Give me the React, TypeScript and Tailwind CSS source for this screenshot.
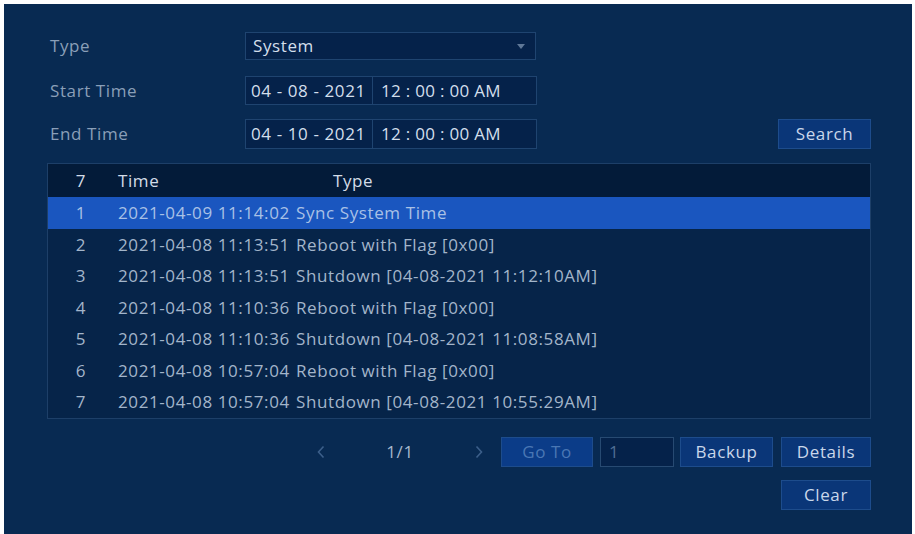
import React from "react";

const rows = [
  { n: 1, time: "2021-04-09 11:14:02", type: "Sync System Time" },
  { n: 2, time: "2021-04-08 11:13:51", type: "Reboot with Flag [0x00]" },
  { n: 3, time: "2021-04-08 11:13:51", type: "Shutdown [04-08-2021 11:12:10AM]" },
  { n: 4, time: "2021-04-08 11:10:36", type: "Reboot with Flag [0x00]" },
  { n: 5, time: "2021-04-08 11:10:36", type: "Shutdown [04-08-2021 11:08:58AM]" },
  { n: 6, time: "2021-04-08 10:57:04", type: "Reboot with Flag [0x00]" },
  { n: 7, time: "2021-04-08 10:57:04", type: "Shutdown [04-08-2021 10:55:29AM]" },
];

const Label = ({ children }: { children: React.ReactNode }) => (
  <div className="w-[198px] pl-[3px] text-[#8a9fb8]">{children}</div>
);

const DateTime = ({ date }: { date: string }) => (
  <div className="flex h-full border border-[#1f4470] bg-[#05224a]">
    <div className="flex w-[127px] items-center border-r border-[#1f4470] pl-[5px] text-[#d3dfec]">
      {date}
    </div>
    <div className="flex w-[163px] items-center pl-[8px] tracking-[0.3px] text-[#d3dfec]">
      12 : 00 : 00 AM
    </div>
  </div>
);

const Btn = ({ children, w, dim }: { children: React.ReactNode; w: string; dim?: boolean }) => (
  <div
    className={`flex h-full items-center justify-center border border-[#1d4c8c] ${
      dim ? "bg-[#0b3c88] text-[#4a77b4]" : "bg-[#0a3678] text-[#c9d7ea]"
    } ${w}`}
  >
    {children}
  </div>
);

const Chevron = ({ flip }: { flip?: boolean }) => (
  <svg width="8" height="14" viewBox="0 0 8 14" className={flip ? "rotate-180" : ""}>
    <path d="M6.5 1.5 L1.5 7 L6.5 12.5" fill="none" stroke="#3c5f8a" strokeWidth="1.6" />
  </svg>
);

export default function App() {
  return (
    <div className="h-[534px] w-[915px] bg-white pl-[4px] pt-[4px] pr-[3px]">
      <div
        className="flex h-full w-full flex-col bg-[#082a52] pl-[43px] pr-[41px] pt-[28px] text-[17px] tracking-[0.6px]"
        style={{ fontFamily: '"Open Sans", "Noto Sans", sans-serif' }}
      >
        {/* filter form */}
        <div className="flex h-[28px] items-center">
          <Label>Type</Label>
          <div className="flex h-full w-[291px] items-center justify-between border border-[#1f4470] bg-[#05224a] pl-[7px] pr-[10px] text-[#d3dfec]">
            <span>System</span>
            <svg width="8" height="5" viewBox="0 0 8 5">
              <path d="M0 0 L8 0 L4 5 Z" fill="#5f7897" />
            </svg>
          </div>
        </div>
        <div className="mt-[16px] flex h-[29px] items-center">
          <Label>Start Time</Label>
          <DateTime date="04 - 08 - 2021" />
        </div>
        <div className="mt-[14px] flex h-[30px] items-center">
          <Label>End Time</Label>
          <DateTime date="04 - 10 - 2021" />
          <div className="ml-auto h-full">
            <Btn w="w-[93px]">Search</Btn>
          </div>
        </div>

        {/* log table */}
        <div className="mt-[14px] border border-[#1d3f68] bg-[#062449]">
          <div className="flex h-[33px] items-center bg-[#031b39] text-[#d4dde8]">
            <div className="w-[66px] text-center">7</div>
            <div className="w-[182px] pl-[4px]">Time</div>
            <div className="pl-[37px]">Type</div>
          </div>
          {rows.map((r) => (
            <div
              key={r.n}
              className={`flex h-[31.5px] items-center ${
                r.n === 1 ? "bg-[#1a56bf] text-[#a9c1e6]" : "text-[#a3b5ca]"
              }`}
            >
              <div className="w-[66px] text-center">{r.n}</div>
              <div className="w-[182px] whitespace-nowrap pl-[4px]">{r.time}</div>
              <div className="whitespace-nowrap">{r.type}</div>
            </div>
          ))}
        </div>

        {/* pagination */}
        <div className="mt-[18px] flex h-[30px] items-center justify-end">
          <div className="flex w-[20px] justify-center">
            <Chevron />
          </div>
          <div className="w-[138px] text-center text-[#a6b8cd]">1/1</div>
          <div className="flex w-[20px] justify-center">
            <Chevron flip />
          </div>
          <div className="ml-[12px] h-full">
            <Btn w="w-[92px]" dim>
              Go To
            </Btn>
          </div>
          <div className="ml-[7px] flex h-full w-[74px] items-center border border-[#274a72] bg-[#05224a] pl-[8px] text-[#4f6f94]">
            1
          </div>
          <div className="ml-[6px] h-full">
            <Btn w="w-[93px]">Backup</Btn>
          </div>
          <div className="ml-[8px] h-full">
            <Btn w="w-[90px]">Details</Btn>
          </div>
        </div>
        <div className="mt-[13px] flex h-[30px] justify-end">
          <Btn w="w-[90px]">Clear</Btn>
        </div>
      </div>
    </div>
  );
}
